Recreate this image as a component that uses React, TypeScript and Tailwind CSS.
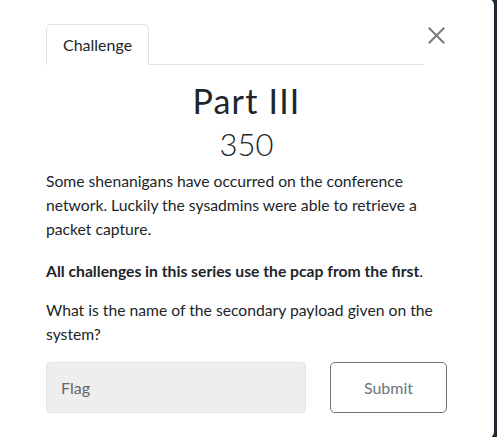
const App = () => {
  return (
    <div className="w-[497px] h-[437px] overflow-hidden bg-[#1c2833]" style={{ fontFamily: "Lato, 'Open Sans', sans-serif" }}>
      <div className="-ml-[3px] -mt-[1px] w-[497px] h-[439px] bg-white rounded-[6px] pl-[49px] pt-[25px] text-[#212529]">
        {/* header: tabs + close */}
        <div className="flex items-start">
          <div className="w-[378px] flex border-b border-[#dee2e6]">
            <div className="-mb-px h-[41px] px-[16px] flex items-center border border-[#dee2e6] border-b-white rounded-t-[5px] bg-white text-[16px]">
              Challenge
            </div>
          </div>
          <button className="ml-[3px] mt-[2px] w-[19px] h-[19px] flex items-center justify-center text-[#7a7a7a]">
            <svg width="17" height="17" viewBox="0 0 17 17" fill="none" stroke="currentColor" strokeWidth="2" strokeLinecap="square">
              <path d="M1.5 1.5 L15.5 15.5 M15.5 1.5 L1.5 15.5" />
            </svg>
          </button>
        </div>

        {/* body */}
        <div className="w-[401px]">
          <h1 className="mt-[14px] text-center text-[34px] leading-[44px] font-normal tracking-[1.2px]">Part III</h1>
          <h2 className="mt-[3px] text-center text-[31px] leading-[36px] font-light">350</h2>
          <p className="mt-[7px] text-[15.7px] leading-[24px]">
            Some shenanigans have occurred on the conference network. Luckily the sysadmins were able to retrieve a packet capture.
          </p>
          <p className="mt-[18px] text-[15.7px] leading-[24px]">
            <b>All challenges in this series use the pcap from the first</b>.
          </p>
          <p className="mt-[15px] text-[15.7px] leading-[24px]">
            What is the name of the secondary payload given on the system?
          </p>
          <div className="mt-[16px] flex gap-[24px]">
            <input
              placeholder="Flag"
              className="w-[260px] h-[51px] px-[14px] rounded-[4px] border border-[#e3e3e3] bg-[#eeeeee] text-[16px] placeholder:text-[#666] outline-none"
            />
            <button className="w-[117px] h-[51px] rounded-[5px] border border-[#6c757d] bg-white text-[16px] text-[#6c757d]">
              Submit
            </button>
          </div>
        </div>
      </div>
    </div>
  );
};

export default App;
